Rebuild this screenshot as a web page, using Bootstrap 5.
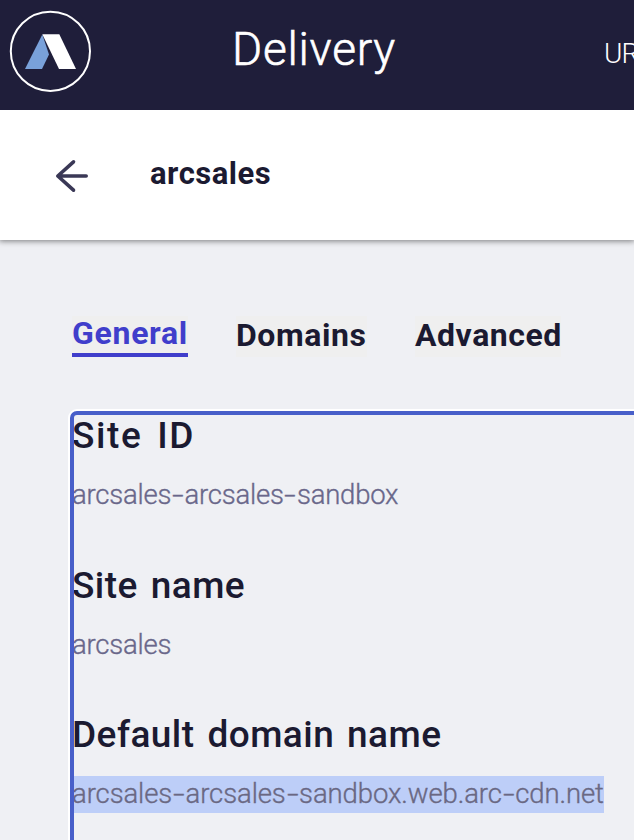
<!DOCTYPE html>
<html lang="en">
<head>
<meta charset="utf-8">
<meta name="viewport" content="width=device-width, initial-scale=1">
<title>Delivery</title>
<link href="https://cdn.jsdelivr.net/npm/bootstrap@5.3.0/dist/css/bootstrap.min.css" rel="stylesheet">
<style>
body{font-family:Roboto,"Liberation Sans",sans-serif;background:#eff0f4;color:#1b1a31;height:840px;overflow:hidden}
.topbar{height:110px;background:#1f1e3a;color:#fff}
.brand-logo{width:82px;height:82px;margin:10px 0 0 9px}
.app-title{font-size:46px;font-weight:300;line-height:60px;margin:19px 0 0 141px;letter-spacing:.75px;-webkit-text-stroke:.6px #fff}
.top-link{font-size:28px;font-weight:300;line-height:40px;margin:34px 0 0 208px;letter-spacing:-.8px;white-space:nowrap}
.subbar{height:130px;background:#fff;box-shadow:0 0 6px 1px rgba(0,0,0,.5);clip-path:inset(0 0 -10px 0)}
.back-btn{width:34px;height:34px;margin:49px 0 0 55px}
.site-title{font-size:31px;font-weight:700;line-height:40px;margin:44px 0 0 61px;letter-spacing:.5px}
.tabs-row{padding:76px 0 0 72px;gap:48px}
.tab-btn{border:0;padding:0;background:#efefef;height:41px;font-size:32px;font-weight:700;line-height:33px;color:#1b1a31;white-space:nowrap;letter-spacing:.55px;padding-bottom:2px}
.tab-btn.active{color:#403ecb;border-bottom:4px solid #403ecb;letter-spacing:.7px}
.t1{width:116px}.t2{width:131px}.t3{width:146px}
.panel-wrap{height:433px;padding:6px 0 0 72px;margin-top:50px}
.panel{width:620px;height:480px;border-radius:5px;outline:4px solid #485fc9;outline-offset:-2px;box-shadow:0 0 0 4px #fff}
.field{height:149.6px}
.field h2{font-size:37px;font-weight:500;line-height:44px;padding-top:1px;margin:0 0 19px;white-space:nowrap;letter-spacing:.46px;word-spacing:3.2px}
.field .id-title{letter-spacing:1.6px;word-spacing:4px}
.field p{font-size:27.5px;font-weight:300;line-height:35px;padding-bottom:2px;margin:0;color:#69678a;white-space:nowrap;letter-spacing:-.22px;-webkit-text-stroke:.35px}
.field .picked{display:inline-block;background:#bdcef8;width:532px;color:#6a6883;letter-spacing:-.1px}
.dash{display:inline-block;transform:scaleX(1.5);margin:0 2.8px}
</style>
</head>
<body>
<header class="topbar d-flex align-items-start overflow-hidden">
<svg class="brand-logo flex-shrink-0" viewBox="9 10 82 82"><circle cx="50.4" cy="51.3" r="39.6" fill="none" stroke="#fff" stroke-width="2"/><path d="M42.3 34.5 49 54.5 42 69H25z" fill="#79a1da"/><path d="M42.3 34.3H59.3L76 69H59z" fill="#fff"/></svg>
<h1 class="app-title flex-shrink-0">Delivery</h1>
<span class="top-link">URL</span>
</header>
<div class="subbar d-flex align-items-start">
<svg class="back-btn flex-shrink-0" viewBox="55 159 34 34" fill="none" stroke="#3a3856" stroke-width="3.6" stroke-linecap="round" stroke-linejoin="round"><path d="M86.2 176H58M73.5 161.8 57.8 176l15.7 14.2"/></svg>
<h2 class="site-title">arcsales</h2>
</div>
<nav class="tabs-row d-flex">
<button class="tab-btn active t1 text-start">General</button>
<button class="tab-btn t2 text-start">Domains</button>
<button class="tab-btn t3 text-start">Advanced</button>
</nav>
<main class="panel-wrap overflow-hidden">
<div class="panel">
<section class="field"><h2 class="id-title">Site ID</h2><p>arcsales<span class="dash">-</span>arcsales<span class="dash">-</span>sandbox</p></section>
<section class="field"><h2>Site name</h2><p>arcsales</p></section>
<section class="field"><h2>Default domain name</h2><p class="picked">arcsales<span class="dash">-</span>arcsales<span class="dash">-</span>sandbox.web.arc<span class="dash">-</span>cdn.net</p></section>
</div>
</main>
<script src="https://cdn.jsdelivr.net/npm/bootstrap@5.3.0/dist/js/bootstrap.bundle.min.js"></script>
</body>
</html>
